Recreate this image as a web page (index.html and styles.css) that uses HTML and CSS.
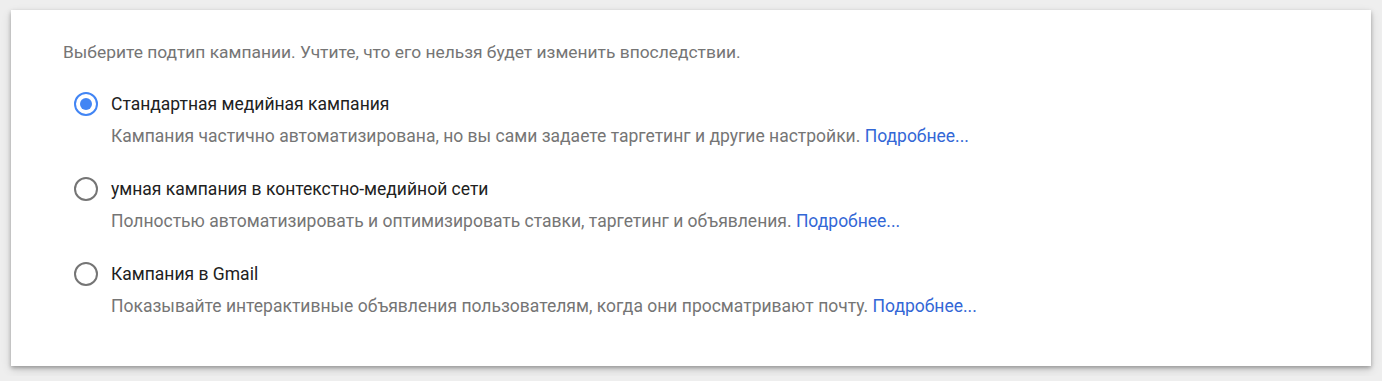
FILE: index.html
```html
<!DOCTYPE html>
<html lang="ru">
<head>
  <meta charset="UTF-8">
  <title>Подтип кампании</title>
  <link rel="stylesheet" href="styles.css">
</head>
<body>
  <div class="card">
    <p class="intro">Выберите подтип кампании. Учтите, что его нельзя будет изменить впоследствии.</p>

    <div class="options">
      <label class="option">
        <span class="radio checked"></span>
        <span class="text">
          <span class="name">Стандартная медийная кампания</span>
          <span class="desc">Кампания частично автоматизирована, но вы сами задаете таргетинг и другие настройки. <a href="#">Подробнее...</a></span>
        </span>
      </label>

      <label class="option">
        <span class="radio"></span>
        <span class="text">
          <span class="name">умная кампания в контекстно-медийной сети</span>
          <span class="desc">Полностью автоматизировать и оптимизировать ставки, таргетинг и объявления. <a href="#">Подробнее...</a></span>
        </span>
      </label>

      <label class="option">
        <span class="radio"></span>
        <span class="text">
          <span class="name">Кампания в Gmail</span>
          <span class="desc">Показывайте интерактивные объявления пользователям, когда они просматривают почту. <a href="#">Подробнее...</a></span>
        </span>
      </label>
    </div>
  </div>
</body>
</html>
```

FILE: styles.css
```css
body {
  margin: 0;
  background-color: #eeeeee;
  font-family: Roboto, "Noto Sans", sans-serif;
  padding: 10px 11px;
}

/* White panel */
.card {
  background-color: #ffffff;
  box-shadow: 0 2px 4px rgba(0, 0, 0, 0.3), 0 4px 10px rgba(0, 0, 0, 0.12);
  padding: 32px 52px 29px;
  height: 356px;
  box-sizing: border-box;
}

.intro {
  margin: 0;
  font-size: 17.4px;
  line-height: 20px;
  color: #757575;
}

.options {
  display: flex;
  flex-direction: column;
  gap: 33px;
  margin-top: 32px;
}

.option {
  display: flex;
  align-items: flex-start;
  gap: 13px;
  cursor: pointer;
}

/* Radio circle */
.radio {
  width: 24px;
  height: 24px;
  border: 2.5px solid #757575;
  border-radius: 50%;
  box-sizing: border-box;
  flex-shrink: 0;
  margin-top: -2px;
  margin-left: 11px;
  display: flex;
  align-items: center;
  justify-content: center;
}

.radio.checked {
  border-color: #4285f4;
}

.radio.checked::after {
  content: "";
  width: 12px;
  height: 12px;
  border-radius: 50%;
  background-color: #4285f4;
}

.text {
  display: flex;
  flex-direction: column;
  gap: 12px;
}

.name {
  font-size: 17.5px;
  line-height: 20px;
  color: #212121;
}

.desc {
  font-size: 17.5px;
  line-height: 20px;
  color: #757575;
}

.desc a {
  color: #3367d6;
  text-decoration: none;
}
```
